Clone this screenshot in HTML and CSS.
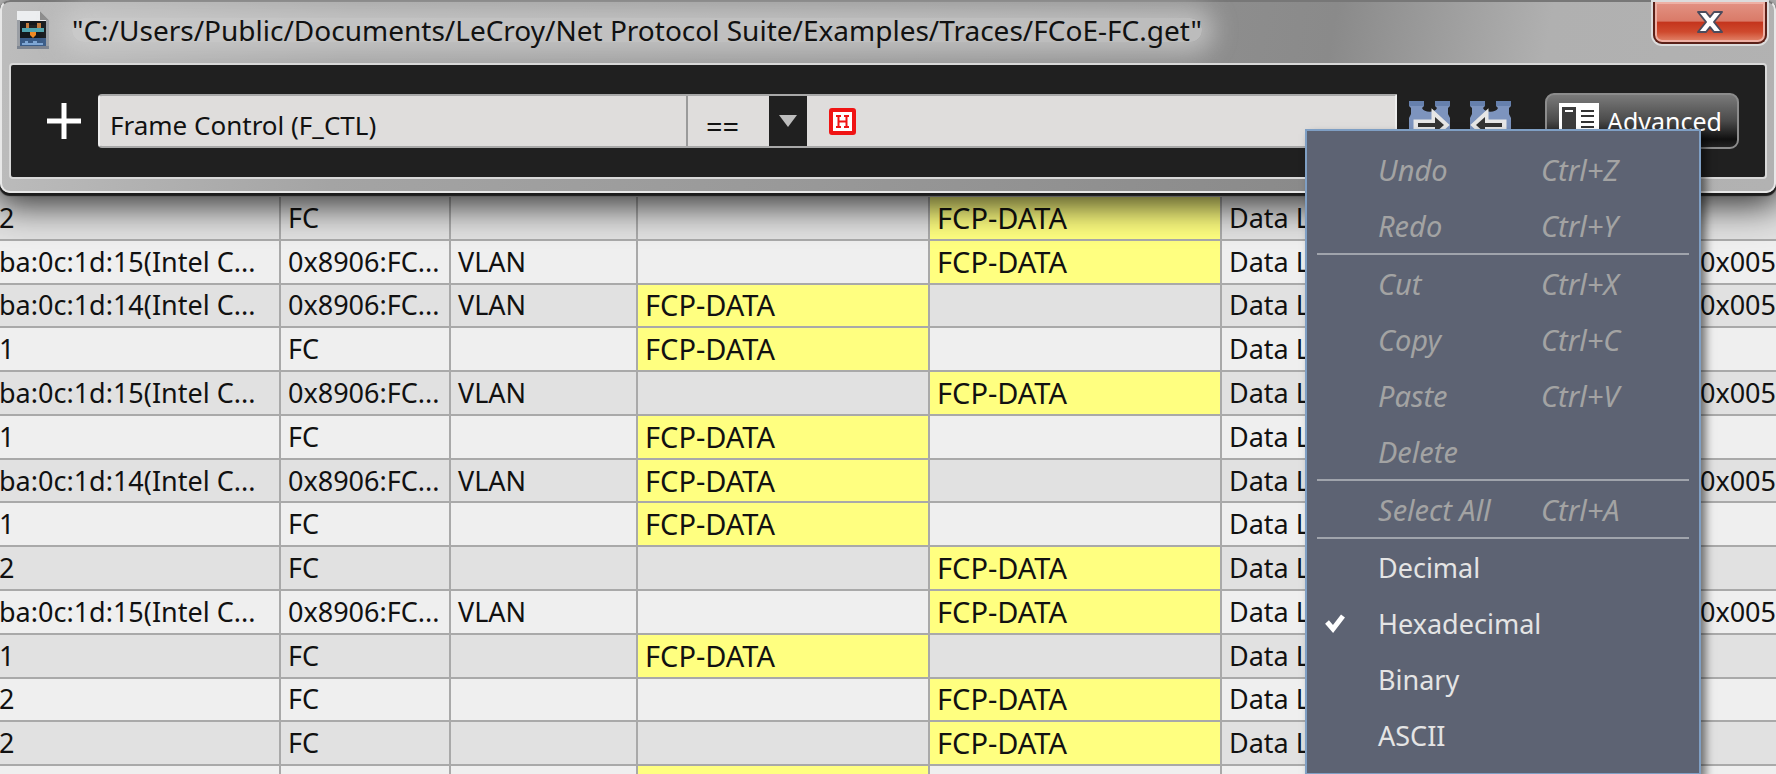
FILE: index.html
```
<!DOCTYPE html>
<html lang="en">
<head>
  <meta charset="UTF-8">
  <meta name="viewport" content="width=device-width, initial-scale=1.0">
  <title>Net Protocol Suite</title>
  <link rel="stylesheet" href="styles.css">
</head>

<body>

  <div class="window">
    <header class="titlebar">
      <svg class="app-icon" viewBox="0 0 34 40" aria-hidden="true">
        <path d="M1 1h23l9 9v29H1z" fill="#eceef0"/>
        <path d="M24 1l9 9h-9z" fill="#8c8c8c"/>
        <path d="M1 10h3v29H1zM30 10h3v29h-3z" fill="#9a9ea4"/>
        <path d="M4 11h26v18H4z" fill="#14181c"/>
        <path d="M10 13h3v7h-3zM21 13h4v7h-4z" fill="#c07a3c"/>
        <path d="M6 18h22v4H6z" fill="#4fa3ae"/>
        <path d="M13 15h8v3h-8z" fill="#222"/>
        <path d="M14 22h6v3l-3 3-3-3z" fill="#f08a24"/>
        <path d="M4 28h26v8H4z" fill="#3a5c88"/>
        <path d="M6 33h3v-2h3v2h5v-2h4v2h6v2H6z" fill="#7ea6d4"/>
        <path d="M1 36h32v3H1z" fill="#7c8490"/>
      </svg>
      <h1 class="title">"C:/Users/Public/Documents/LeCroy/Net Protocol Suite/Examples/Traces/FCoE-FC.get"</h1>
      <button class="close" aria-label="Close">
        <svg viewBox="0 0 30 26" width="30" height="26" aria-hidden="true">
          <path d="M3 3h8l4 5 4-5h8l-8 10 8 10h-8l-4-5-4 5H3l8-10z" fill="#fff" stroke="#4b4b5c" stroke-width="2" stroke-linejoin="round"/>
        </svg>
      </button>
    </header>

    <div class="toolbar">
      <button class="add" aria-label="Add condition">
        <svg viewBox="0 0 34 36" width="34" height="36" aria-hidden="true">
          <path d="M17 0v36M0 18h34" stroke="#fff" stroke-width="5"/>
        </svg>
      </button>
      <div class="filter">
        <input class="field" type="text" value="Frame Control (F_CTL)" aria-label="Field">
        <div class="operator">
          <select aria-label="Operator">
            <option>==</option>
            <option>!=</option>
          </select>
          <span class="arrow"></span>
        </div>
        <label class="value">
          <svg viewBox="0 0 27 27" width="27" height="27" aria-hidden="true">
            <rect x="2" y="2" width="23" height="23" rx="1" fill="#fff" stroke="#f01414" stroke-width="4"/>
            <path d="M7 8h5M15 8h5M7 19h5M15 19h5M9.500 8v11M17.500 8v11M9 13.500h9" stroke="#f01414" stroke-width="2" fill="none"/>
          </svg>
          <input type="text" aria-label="Value">
        </label>
      </div>
      <div class="finders">
        <button class="find" aria-label="Find next">
          <svg viewBox="0 0 43 42" width="43" height="42" aria-hidden="true">
            <path d="M1 1h15v5l-2 2c2 5 13 5 15 0l-2-2V1h15v5l-2 2v6l2 4v24H1V18l2-4V8L1 6z" fill="#7d94be"/>
            <path d="M1 1h15v5H1zM27 1h15v5H27z" fill="#6680ad"/>
            <path d="M8 22h18v-8l12 11-12 11v-8H8z" fill="#e6e6e6" stroke="#e6e6e6" stroke-width="5"/>
            <path d="M10 23h17v-6l9 8-9 8v-6H10z" fill="#333"/>
          </svg>
        </button>
        <button class="find" aria-label="Find previous">
          <svg viewBox="0 0 43 42" width="43" height="42" aria-hidden="true">
            <path d="M1 1h15v5l-2 2c2 5 13 5 15 0l-2-2V1h15v5l-2 2v6l2 4v24H1V18l2-4V8L1 6z" fill="#7d94be"/>
            <path d="M1 1h15v5H1zM27 1h15v5H27z" fill="#6680ad"/>
            <path d="M35 22H17v-8L5 25l12 11v-8h18z" fill="#e6e6e6" stroke="#e6e6e6" stroke-width="5"/>
            <path d="M33 23H16v-6l-9 8 9 8v-6h17z" fill="#333"/>
          </svg>
        </button>
      </div>
      <button class="advanced">
        <svg viewBox="0 0 40 36" width="40" height="36" aria-hidden="true">
          <path d="M0 0h40v36H0z" fill="#fff"/>
          <path d="M3 4h14v29H3z" fill="#3c3c3c"/>
          <path d="M6 8h8" stroke="#fff" stroke-width="2"/>
          <path d="M22 8h13M22 13h13M22 19h13M22 24h13M22 29h13" stroke="#333" stroke-width="2"/>
        </svg>
        Advanced
      </button>
    </div>
  </div>

  <table class="trace">
    <colgroup>
      <col class="col-address">
      <col class="col-type">
      <col class="col-vlan">
      <col class="col-data">
      <col class="col-data">
      <col>
      <col class="col-id">
    </colgroup>
    <tbody>
      <tr><td>2</td><td>FC</td><td></td><td></td><td class="hit">FCP-DATA</td><td>Data L</td><td></td></tr>
      <tr><td>ba:0c:1d:15(Intel C...</td><td>0x8906:FC...</td><td>VLAN</td><td></td><td class="hit">FCP-DATA</td><td>Data L</td><td>:0x005</td></tr>
      <tr><td>ba:0c:1d:14(Intel C...</td><td>0x8906:FC...</td><td>VLAN</td><td class="hit">FCP-DATA</td><td></td><td>Data L</td><td>:0x005</td></tr>
      <tr><td>1</td><td>FC</td><td></td><td class="hit">FCP-DATA</td><td></td><td>Data L</td><td></td></tr>
      <tr><td>ba:0c:1d:15(Intel C...</td><td>0x8906:FC...</td><td>VLAN</td><td></td><td class="hit">FCP-DATA</td><td>Data L</td><td>:0x005</td></tr>
      <tr><td>1</td><td>FC</td><td></td><td class="hit">FCP-DATA</td><td></td><td>Data L</td><td></td></tr>
      <tr><td>ba:0c:1d:14(Intel C...</td><td>0x8906:FC...</td><td>VLAN</td><td class="hit">FCP-DATA</td><td></td><td>Data L</td><td>:0x005</td></tr>
      <tr><td>1</td><td>FC</td><td></td><td class="hit">FCP-DATA</td><td></td><td>Data L</td><td></td></tr>
      <tr><td>2</td><td>FC</td><td></td><td></td><td class="hit">FCP-DATA</td><td>Data L</td><td></td></tr>
      <tr><td>ba:0c:1d:15(Intel C...</td><td>0x8906:FC...</td><td>VLAN</td><td></td><td class="hit">FCP-DATA</td><td>Data L</td><td>:0x005</td></tr>
      <tr><td>1</td><td>FC</td><td></td><td class="hit">FCP-DATA</td><td></td><td>Data L</td><td></td></tr>
      <tr><td>2</td><td>FC</td><td></td><td></td><td class="hit">FCP-DATA</td><td>Data L</td><td></td></tr>
      <tr><td>2</td><td>FC</td><td></td><td></td><td class="hit">FCP-DATA</td><td>Data L</td><td></td></tr>
      <tr><td>&nbsp;</td><td></td><td></td><td class="hit"></td><td></td><td></td><td></td></tr>
    </tbody>
  </table>

  <div class="menu" role="menu">
    <button role="menuitem" disabled><span>Undo</span><kbd>Ctrl+Z</kbd></button>
    <button role="menuitem" disabled><span>Redo</span><kbd>Ctrl+Y</kbd></button>
    <hr>
    <button role="menuitem" disabled><span>Cut</span><kbd>Ctrl+X</kbd></button>
    <button role="menuitem" disabled><span>Copy</span><kbd>Ctrl+C</kbd></button>
    <button role="menuitem" disabled><span>Paste</span><kbd>Ctrl+V</kbd></button>
    <button role="menuitem" disabled><span>Delete</span></button>
    <hr>
    <button role="menuitem" disabled><span>Select All</span><kbd>Ctrl+A</kbd></button>
    <hr>
    <button role="menuitemradio" aria-checked="false"><span>Decimal</span></button>
    <button role="menuitemradio" aria-checked="true">
      <svg class="check" viewBox="0 0 20 20" width="20" height="20" aria-hidden="true">
        <path d="M2 9l6 7L18 3" fill="none" stroke="#fff" stroke-width="5"/>
      </svg>
      <span>Hexadecimal</span>
    </button>
    <button role="menuitemradio" aria-checked="false"><span>Binary</span></button>
    <button role="menuitemradio" aria-checked="false"><span>ASCII</span></button>
  </div>

</body>
</html>
```
FILE: styles.css
```
:root {
  --toolbar-bg: #202020;
  --field-bg: #dfdddc;
  --grid-line: #a9a9a9;
  --menu-bg: #5d6373;
  --menu-border: #7f9fc4;
}

* {
  margin: 0;
  padding: 0;
  box-sizing: border-box;
}

body {
  position: relative;
  height: 100vh;
  overflow: hidden;
  background: #e1e1e1;
  font-family: "Noto Sans", "Open Sans", sans-serif;
  font-size: 27px;
  color: #111;
}

button,
input,
select {
  font: inherit;
  color: inherit;
  border: none;
  background: none;
}

/* Search window */
.window {
  position: relative;
  z-index: 1;
  padding: 0 7px 12px;
  border: 2px solid #e8e8e8;
  border-top: 2px solid #777;
  border-radius: 10px;
  background: linear-gradient(100deg, #bdbdbd 0, #a4a4a4 20%, #999 45%, #8a8a8a 74%, #b0b0b0 86%, #b2b2b2 100%);
  box-shadow: 0 2px 1px 1px #1c1c1c, 0 6px 36px 6px rgba(0, 0, 0, 0.8);
}

.titlebar {
  display: flex;
  align-items: center;
  height: 61px;
  padding: 0 0 5px 7px;
}

.app-icon {
  width: 34px;
  height: 40px;
}

.title {
  margin-left: 22px;
  border-radius: 12px;
  font-size: 28px;
  font-weight: 400;
  line-height: 24px;
  white-space: nowrap;
  background: rgba(208, 208, 208, 0.7);
  box-shadow: 0 0 24px 12px rgba(208, 208, 208, 0.7);
}

.close {
  align-self: flex-start;
  width: 114px;
  height: 42px;
  margin-left: auto;
  border: 2px solid #5a2018;
  border-top: none;
  border-radius: 0 0 9px 9px;
  background: linear-gradient(#e39384, #d97a68 48%, #c4341c 50%, #cf4a2e 75%, #e48a70);
  box-shadow: inset 0 0 0 2px #eeb0a4, 0 0 0 2px #dcdcdc;
}

.close svg {
  display: block;
  margin: 0 auto;
}

.toolbar {
  position: relative;
  display: flex;
  align-items: center;
  height: 116px;
  padding: 0 26px 0 36px;
  border: 2px solid #d8d8d8;
  border-radius: 4px;
  background: var(--toolbar-bg);
}

.add svg,
.find svg,
.advanced svg {
  display: block;
}

.filter {
  display: flex;
  flex: 1;
  height: 54px;
  margin-left: 17px;
  border: 2px solid #a8a8a8;
  border-color: #a8a8a8 #eee #a8a8a8 #eee;
  border-radius: 4px 0 0 4px;
  background: var(--field-bg);
}

.field {
  width: 588px;
  padding: 8px 10px 0;
  border-right: 2px solid #9a9a9a;
  font-size: 26px;
}

.operator {
  position: relative;
  width: 119px;
}

.operator select {
  width: 100%;
  height: 100%;
  padding: 8px 18px 0;
  appearance: none;
  font-size: 29px;
}

.arrow {
  position: absolute;
  top: 0;
  right: 0;
  display: flex;
  align-items: center;
  justify-content: center;
  width: 38px;
  height: 100%;
  background: var(--toolbar-bg);
  pointer-events: none;
}

.arrow::after {
  content: "";
  border: 9px solid transparent;
  border-top: 12px solid #bdbdbd;
  border-bottom: none;
}

.value {
  display: flex;
  flex: 1;
  align-items: center;
  gap: 8px;
  padding-left: 22px;
}

.value input {
  flex: 1;
  min-width: 0;
  height: 100%;
}

.finders {
  display: flex;
  gap: 18px;
  margin-left: 11px;
}

.advanced {
  display: flex;
  align-items: center;
  gap: 8px;
  height: 56px;
  margin-left: 33px;
  padding: 0 15px 0 12px;
  border: 2px solid #8c8c8c;
  border-radius: 9px;
  background: linear-gradient(#7a7a7a, #4a4a4a 50%, #101010 85%, #222);
  font-size: 25px;
  color: #fff;
}

/* Trace rows */
.trace {
  width: 100%;
  height: 613px;
  margin-top: 4px;
  table-layout: fixed;
  border-collapse: separate;
  border-spacing: 0;
}

.trace tr:nth-child(odd) {
  background: #e1e1e1;
}

.trace tr:nth-child(even) {
  background: #efefef;
}

.trace td {
  padding: 0 0 0 7px;
  border-right: 2px solid var(--grid-line);
  border-bottom: 2px solid var(--grid-line);
  line-height: 36px;
  white-space: nowrap;
  overflow: hidden;
}

.trace td:first-child {
  padding-left: 0;
  text-indent: -1px;
}

.trace td:last-child {
  padding-left: 0;
  border-right: none;
  text-align: right;
}

.trace td:nth-child(6) {
  border-right: none;
}

.trace .hit {
  background: #ffff80;
  font-size: 29px;
}

.col-address { width: 281px; }
.col-type { width: 170px; }
.col-vlan { width: 187px; }
.col-data { width: 292px; }
.col-id { width: 90px; }

/* Context menu */
.menu {
  position: absolute;
  z-index: 2;
  top: 129px;
  right: 75px;
  width: 396px;
  padding: 10px 0;
  border: 2px solid var(--menu-border);
  background: var(--menu-bg);
  box-shadow: 5px 5px 8px rgba(0, 0, 0, 0.5);
}

.menu button {
  position: relative;
  display: grid;
  grid-template-columns: 163px 1fr;
  align-items: center;
  width: 100%;
  height: 56px;
  padding-left: 71px;
  text-align: left;
  color: #e4e4e4;
}

.menu button:disabled {
  font-size: 29px;
  font-style: italic;
  color: #a3a3a3;
}

.menu kbd {
  font: inherit;
}

.menu hr {
  height: 2px;
  margin: 0 10px;
  border: none;
  background: #a0a4ac;
}

.check {
  position: absolute;
  top: 18px;
  left: 18px;
}
```
